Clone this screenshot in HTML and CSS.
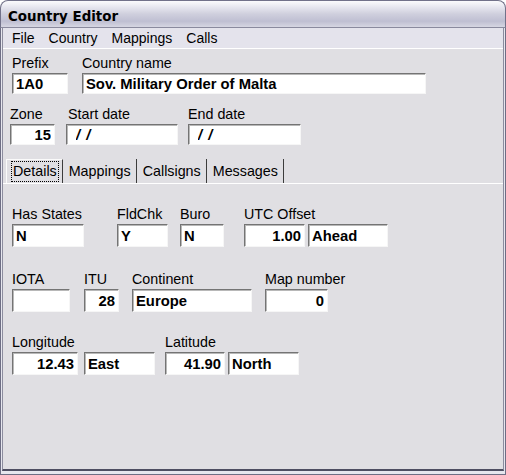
FILE: index.html
```html
<!DOCTYPE html>
<html lang="en">
<head>
    <meta charset="UTF-8">
    <title>Country Editor</title>
    <link rel="stylesheet" href="styles.css">
</head>
<body>
    <div class="window">
        <div class="titlebar">Country Editor</div>

        <div class="frame">
            <div class="client">
                <nav class="menubar">
                    <span class="menu-item">File</span>
                    <span class="menu-item">Country</span>
                    <span class="menu-item">Mappings</span>
                    <span class="menu-item">Calls</span>
                </nav>

                <div class="editor">
                    <div class="row row-prefix">
                        <div class="field">
                            <label class="field-label" for="prefix">Prefix</label>
                            <input id="prefix" class="box box-sm w-prefix" type="text" value="1A0">
                        </div>
                        <div class="field ml-country">
                            <label class="field-label" for="cname">Country name</label>
                            <input id="cname" class="box box-sm w-country" type="text" value="Sov. Military Order of Malta">
                        </div>
                    </div>

                    <div class="row row-zone">
                        <div class="field">
                            <label class="field-label" for="zone">Zone</label>
                            <input id="zone" class="box box-sm num w-zone" type="text" value="15">
                        </div>
                        <div class="field ml-start">
                            <label class="field-label label-date" for="sdate">Start date</label>
                            <input id="sdate" class="box box-sm date w-date" type="text" value="/ /">
                        </div>
                        <div class="field ml-end">
                            <label class="field-label" for="edate">End date</label>
                            <input id="edate" class="box box-sm date w-date2" type="text" value="/ /">
                        </div>
                    </div>

                    <div class="tabstrip">
                        <div class="tab active"><span>Details</span></div>
                        <div class="tab"><span>Mappings</span></div>
                        <div class="tab"><span>Callsigns</span></div>
                        <div class="tab"><span>Messages</span></div>
                    </div>

                    <div class="tab-page">
                        <div class="row">
                            <div class="field">
                                <label class="field-label">Has States</label>
                                <input class="box w-states" type="text" value="N">
                            </div>
                            <div class="field ml-fldchk">
                                <label class="field-label">FldChk</label>
                                <input class="box w-fldchk" type="text" value="Y">
                            </div>
                            <div class="field ml-buro">
                                <label class="field-label">Buro</label>
                                <input class="box w-buro" type="text" value="N">
                            </div>
                            <div class="field ml-utc">
                                <label class="field-label">UTC Offset</label>
                                <div class="pair">
                                    <input class="box num w-utc" type="text" value="1.00">
                                    <input class="box w-ahead" type="text" value="Ahead">
                                </div>
                            </div>
                        </div>

                        <div class="row row-gap">
                            <div class="field">
                                <label class="field-label">IOTA</label>
                                <input class="box w-iota" type="text" value="">
                            </div>
                            <div class="field ml-itu">
                                <label class="field-label">ITU</label>
                                <input class="box num w-itu" type="text" value="28">
                            </div>
                            <div class="field ml-cont">
                                <label class="field-label">Continent</label>
                                <input class="box w-cont" type="text" value="Europe">
                            </div>
                            <div class="field ml-map">
                                <label class="field-label">Map number</label>
                                <input class="box num w-map" type="text" value="0">
                            </div>
                        </div>

                        <div class="row row-gap2">
                            <div class="field">
                                <label class="field-label">Longitude</label>
                                <div class="pair pair-wide">
                                    <input class="box num w-long" type="text" value="12.43">
                                    <input class="box w-dir" type="text" value="East">
                                </div>
                            </div>
                            <div class="field ml-lat">
                                <label class="field-label">Latitude</label>
                                <div class="pair">
                                    <input class="box num w-lat" type="text" value="41.90">
                                    <input class="box w-dir" type="text" value="North">
                                </div>
                            </div>
                        </div>
                    </div>
                </div>
            </div>
        </div>
    </div>
</body>
</html>
```

FILE: styles.css
```css
* {
    margin: 0;
    padding: 0;
    box-sizing: border-box;
}

body {
    font-family: "Liberation Sans", Arial, sans-serif;
    font-size: 14.3px;
    color: #000;
    background: #fff;
}

.window {
    width: 506px;
    height: 475px;
    display: flex;
    flex-direction: column;
}

/* Title bar (XP silver look) */
.titlebar {
    height: 28px;
    border: 1px solid #72728a;
    border-bottom-color: #8a8a9e;
    border-radius: 8px 8px 0 0;
    background: linear-gradient(to bottom, #fbfbfd 0%, #e8e8f0 22%, #cfcfdd 50%, #bfbfd2 78%, #d6d6e2 100%);
    font-family: "DejaVu Sans", sans-serif;
    font-weight: bold;
    font-size: 13.4px;
    line-height: 22px;
    padding: 5px 0 0 7px;
}

.frame {
    flex: 1;
    display: flex;
    flex-direction: column;
    background: #e6e6ee;
    border: 1px solid #6e6e84;
    border-top: none;
    padding: 0 1px 3px;
}

.client {
    flex: 1;
    display: flex;
    flex-direction: column;
    background: #e0dfe3;
    border-left: 1px solid #8c8c9e;
    border-right: 1px solid #8c8c9e;
    border-bottom: 2px solid #4e4e62;
}

/* Menu */
.menubar {
    display: flex;
    gap: 14px;
    height: 21px;
    padding-left: 9px;
    background: #e4e3ec;
    border-bottom: 1px solid #fff;
    font-size: 14px;
    line-height: 20px;
}

/* Editor area */
.editor {
    flex: 1;
}

.row {
    display: flex;
    align-items: flex-start;
}

.row-prefix {
    padding: 6px 0 0 9px;
}

.row-zone {
    padding: 12px 0 0 7px;
}

.field {
    display: flex;
    flex-direction: column;
}

.field-label {
    line-height: 17px;
    margin-bottom: 1px;
    white-space: nowrap;
}

.label-date {
    padding-left: 2px;
}

.box {
    height: 23px;
    border: 1px solid;
    border-color: #747474 #f6f6f6 #f6f6f6 #747474;
    box-shadow: inset 1px 1px 0 #b8b8b8;
    background: #fff;
    font-family: "Liberation Sans", Arial, sans-serif;
    font-size: 14.8px;
    font-weight: bold;
    color: #000;
    padding: 0 3px;
    outline: none;
}

.box-sm {
    height: 21px;
}

.num {
    text-align: right;
}

.date {
    padding-left: 9px;
    font-style: italic;
    letter-spacing: 1px;
}

.pair {
    display: flex;
    gap: 3px;
}

.pair-wide {
    gap: 6px;
}

/* Field widths and spacing */
.w-prefix { width: 56px; }
.w-country { width: 344px; }
.w-zone { width: 45px; }
.w-date { width: 112px; }
.w-date2 { width: 113px; }

.ml-country { margin-left: 14px; }
.ml-start { margin-left: 11px; }
.ml-end { margin-left: 10px; }

.w-states { width: 72px; }
.w-fldchk { width: 51px; }
.w-buro { width: 44px; }
.w-utc { width: 61px; }
.w-ahead { width: 80px; }

.ml-fldchk { margin-left: 33px; }
.ml-buro { margin-left: 12px; }
.ml-utc { margin-left: 20px; }

.w-iota { width: 58px; }
.w-itu { width: 35px; }
.w-cont { width: 120px; }
.w-map { width: 63px; }

.ml-itu { margin-left: 14px; }
.ml-cont { margin-left: 13px; }
.ml-map { margin-left: 13px; }

.w-long { width: 66px; }
.w-lat { width: 60px; }
.w-dir { width: 71px; }

.ml-lat { margin-left: 10px; }

/* Tabs */
.tabstrip {
    display: flex;
    margin-top: 14px;
    padding-left: 3px;
    height: 25px;
    border-bottom: 1px solid #fff;
}

.tab {
    height: 24px;
    line-height: 25px;
    padding: 0 5px 0 6px;
    border-right: 1px solid #3c3c3c;
    white-space: nowrap;
}

.tab.active {
    border-left: 1px solid #fafafa;
    border-top: 1px solid #fafafa;
    line-height: 22px;
    padding: 0 3px 0 4px;
}

.tab.active span {
    display: inline-block;
    line-height: 19px;
    padding: 0 1px;
    border: 1px dotted #000;
}

.tab-page {
    padding: 22px 0 0 9px;
}

.row-gap {
    margin-top: 24px;
}

.row-gap2 {
    margin-top: 22px;
}
```
